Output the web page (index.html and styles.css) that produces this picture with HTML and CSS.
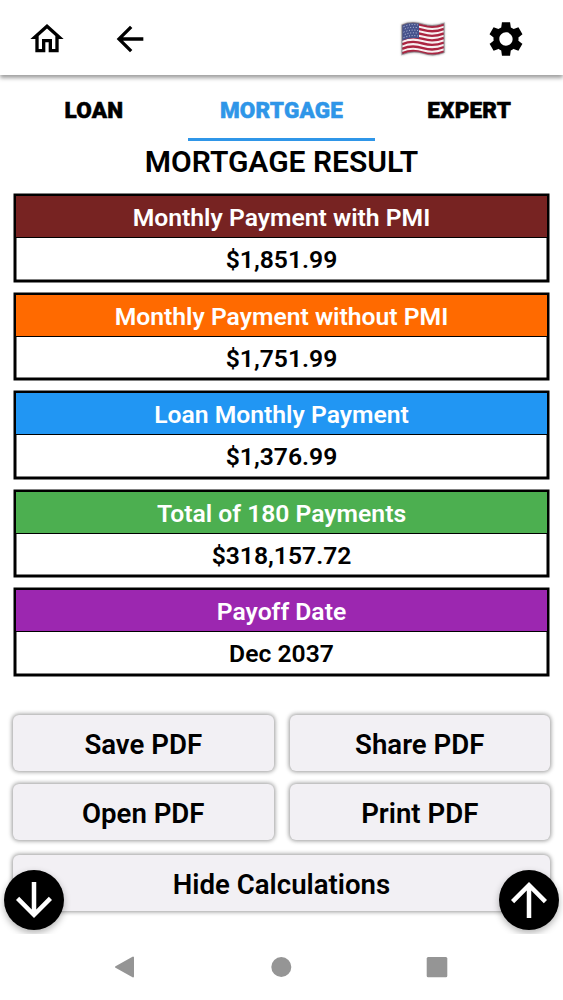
FILE: index.html
```html
<!DOCTYPE html>
<html lang="en">
<head>
    <meta charset="UTF-8">
    <meta name="viewport" content="width=device-width, initial-scale=1.0">
    <title>Mortgage Result</title>
    <link rel="stylesheet" href="styles.css">
</head>
<body>
    <header class="toolbar">
        <button class="icon-btn home-btn" aria-label="Home">
            <svg viewBox="0 0 24 24"><path d="M12 5.69l5 4.5V18h-2v-6H9v6H7v-7.81l5-4.5M12 3L2 12h3v8h6v-6h2v6h6v-8h3L12 3z"/></svg>
        </button>
        <button class="icon-btn back-btn" aria-label="Back">
            <svg viewBox="0 0 24 24"><path d="M20 11H7.83l5.59-5.59L12 4l-8 8 8 8 1.41-1.41L7.83 13H20v-2z"/></svg>
        </button>
        <button class="icon-btn flag-btn" aria-label="Country">
            <svg class="flag" viewBox="0 0 46 36">
                <defs>
                    <clipPath id="flag-shape">
                        <path d="M2 4C9 .8 16 1 23 3.200S37 5 44 2.200V31.500C37 34.500 30 34.500 23 32.300S9 30.500 2 33.500Z"/>
                    </clipPath>
                </defs>
                <g clip-path="url(#flag-shape)">
                    <rect width="46" height="36" fill="#f7eff0"/>
                    <g fill="none" stroke="#ab2440" stroke-width="2.400">
                        <path d="M2 5.140C9 1.940 16 2.140 23 4.340S37 6.140 44 3.340"/>
                        <path d="M2 9.680C9 6.480 16 6.680 23 8.880S37 10.680 44 7.880"/>
                        <path d="M2 14.220C9 11.020 16 11.220 23 13.420S37 15.220 44 12.420"/>
                        <path d="M2 18.760C9 15.560 16 15.760 23 17.960S37 19.760 44 16.960"/>
                        <path d="M2 23.300C9 20.100 16 20.300 23 22.500S37 24.300 44 21.500"/>
                        <path d="M2 27.840C9 24.640 16 24.840 23 27.040S37 28.840 44 26.040"/>
                        <path d="M2 32.380C9 29.180 16 29.380 23 31.580S37 33.380 44 30.580"/>
                    </g>
                    <path d="M2 4C8 1.200 13 1 19 2.200V17.500C13 16.500 8 17 2 19.800Z" fill="#46528c"/>
                    <g fill="none" stroke="#b9bfdb" stroke-width="1" stroke-dasharray="1 1.800">
                        <path d="M3.500 5.700C9 3.400 13 3.200 18 4"/>
                        <path d="M4.800 8C9 6.200 13 5.900 18 6.700"/>
                        <path d="M3.500 11.200C9 8.900 13 8.700 18 9.500"/>
                        <path d="M4.800 13.500C9 11.700 13 11.400 18 12.200"/>
                        <path d="M3.500 16.700C9 14.400 13 14.200 18 15"/>
                    </g>
                </g>
                <path d="M2 4C9 .8 16 1 23 3.200S37 5 44 2.200V31.500C37 34.500 30 34.500 23 32.300S9 30.500 2 33.500Z" fill="none" stroke="#77717a" stroke-opacity=".65" stroke-width="1.200"/>
            </svg>
        </button>
        <button class="icon-btn settings-btn" aria-label="Settings">
            <svg viewBox="0 0 24 24"><path d="M19.440 12.990l-.01.02c.04-.33.08-.67.08-1.010 0-.34-.03-.66-.07-.99l.01.02 2.440-1.920-2.430-4.220-2.870 1.160.01.01c-.52-.4-1.090-.74-1.710-1h.01L14.440 2H9.570l-.44 3.070h.01c-.62.26-1.190.6-1.710 1l.01-.01-2.880-1.170-2.440 4.220 2.440 1.920.01-.02c-.04.33-.07.65-.07.99 0 .34.03.68.08 1.010l-.01-.02-2.100 1.650-.33.26 2.430 4.200 2.880-1.150-.02-.04c.53.41 1.100.75 1.730 1.010h-.03L9.580 22h4.850s.03-.18.06-.42l.38-2.650h-.01c.62-.26 1.200-.6 1.730-1.010l-.02.04 2.880 1.150 2.430-4.200s-.14-.12-.33-.26l-2.110-1.660zM12 16c-2.210 0-4-1.790-4-4s1.790-4 4-4 4 1.790 4 4-1.790 4-4 4z"/></svg>
        </button>
    </header>

    <nav class="tabs">
        <a class="tab tab-loan">LOAN</a>
        <a class="tab tab-mortgage active">MORTGAGE</a>
        <a class="tab tab-expert">EXPERT</a>
    </nav>

    <main class="content">
        <h1>MORTGAGE RESULT</h1>

        <section class="results">
            <div class="result">
                <div class="result-label maroon">Monthly Payment with PMI</div>
                <div class="result-value">$1,851.99</div>
            </div>
            <div class="result">
                <div class="result-label orange">Monthly Payment without PMI</div>
                <div class="result-value">$1,751.99</div>
            </div>
            <div class="result">
                <div class="result-label blue">Loan Monthly Payment</div>
                <div class="result-value">$1,376.99</div>
            </div>
            <div class="result">
                <div class="result-label green">Total of 180 Payments</div>
                <div class="result-value">$318,157.72</div>
            </div>
            <div class="result">
                <div class="result-label purple">Payoff Date</div>
                <div class="result-value">Dec 2037</div>
            </div>
        </section>

        <section class="actions">
            <button class="action">Save PDF</button>
            <button class="action">Share PDF</button>
            <button class="action">Open PDF</button>
            <button class="action">Print PDF</button>
            <button class="action wide">Hide Calculations</button>
        </section>

        <button class="fab fab-down" aria-label="Scroll down">
            <svg viewBox="0 0 24 24"><path d="M20 12l-1.410-1.410L13 16.170V4h-2v12.170l-5.580-5.590L4 12l8 8 8-8z"/></svg>
        </button>
        <button class="fab fab-up" aria-label="Scroll up">
            <svg viewBox="0 0 24 24"><path d="M4 12l1.410 1.410L11 7.830V20h2V7.830l5.580 5.590L20 12l-8-8-8 8z"/></svg>
        </button>
    </main>

    <footer class="system-nav">
        <svg viewBox="0 0 22 24"><path d="M20 2.500V21.500L3 12Z" stroke="#959595" stroke-width="2" stroke-linejoin="round"/></svg>
        <svg viewBox="0 0 22 24"><circle cx="11.300" cy="12" r="10"/></svg>
        <svg viewBox="0 0 22 24"><rect x=".7" y="2" width="20.600" height="20.300" rx="1.500"/></svg>
    </footer>
</body>
</html>
```
FILE: styles.css
```css
* {
    margin: 0;
    padding: 0;
    box-sizing: border-box;
}

body {
    width: 563px;
    height: 1000px;
    display: flex;
    flex-direction: column;
    overflow: hidden;
    background: #fff;
    color: #000;
    font-family: Roboto, sans-serif;
}

button {
    border: none;
    background: none;
    font-family: inherit;
    color: inherit;
}

/* Top bar */
.toolbar {
    height: 75px;
    flex: none;
    display: flex;
    align-items: center;
    padding: 2px 37px 0 26.5px;
    background: #fff;
    box-shadow: 0 3px 4px rgba(0, 0, 0, 0.38);
}

.icon-btn svg {
    display: block;
    width: 40px;
    height: 40px;
}

.back-btn {
    margin-left: 43.5px;
}

.flag-btn {
    margin-left: auto;
}

.icon-btn .flag {
    width: 46px;
    height: 36px;
    filter: drop-shadow(0 0 1px rgba(0, 0, 0, 0.4));
}

.settings-btn {
    margin-left: 40px;
}

/* Tabs */
.tabs {
    height: 66px;
    flex: none;
    display: grid;
    grid-template-columns: repeat(3, 1fr);
}

.tab {
    display: flex;
    align-items: center;
    justify-content: center;
    padding-top: 7px;
    border-bottom: 3px solid transparent;
    font-size: 22.5px;
    font-weight: 900;
    letter-spacing: 0.2px;
    -webkit-text-stroke: 0.5px currentColor;
}

.tab.active {
    color: #2f96e8;
    border-bottom-color: #2f96e8;
}

/* Results */
.content {
    position: relative;
    height: 793px;
    flex: none;
    overflow: hidden;
}

h1 {
    height: 43px;
    margin-bottom: 10px;
    line-height: 42px;
    text-align: center;
    font-size: 30px;
    font-weight: 600;
}

.results {
    display: flex;
    flex-direction: column;
    gap: 11px;
    padding: 0 14px;
}

.result {
    height: 87.5px;
    border: 2px solid #000;
    box-shadow: 0 0 0 0.5px #000, inset 0 0 0 0.5px #000;
    text-align: center;
    font-size: 24.7px;
    font-weight: 600;
}

.result-label {
    height: 42px;
    line-height: 44px;
    border-bottom: 1.500px solid #000;
    color: #fff;
}

.result-value {
    line-height: 44px;
}

.maroon {
    background: #772322;
}

.orange {
    background: #ff6a00;
}

.blue {
    background: #2196f3;
}

.green {
    background: #4caf50;
}

.purple {
    background: #9c27b0;
}

/* PDF buttons */
.actions {
    display: grid;
    grid-template-columns: 1fr 1fr;
    gap: 13px 16px;
    padding: 39.5px 13px 0;
}

.action {
    height: 56px;
    padding-top: 2px;
    border-radius: 6px;
    background: #f2f0f4;
    box-shadow: 0 0 4px 1px rgba(0, 0, 0, 0.4);
    font-size: 27.6px;
    font-weight: 600;
}

.action.wide {
    grid-column: 1 / -1;
    margin-top: 2px;
}

/* Floating scroll buttons */
.fab {
    position: absolute;
    bottom: 4px;
    width: 60px;
    height: 60px;
    display: flex;
    align-items: center;
    justify-content: center;
    border-radius: 50%;
    background: #000;
    box-shadow: 0 3px 7px rgba(0, 0, 0, 0.3);
}

.fab svg {
    width: 54px;
    height: 54px;
    flex: none;
    fill: #fff;
}

.fab-down {
    left: 4px;
}

.fab-up {
    right: 4px;
}

/* Android navigation */
.system-nav {
    flex: 1;
    display: flex;
    justify-content: space-between;
    align-items: center;
    padding: 0 115px 0 113px;
}

.system-nav svg {
    width: 22px;
    height: 24px;
    fill: #959595;
}
```
